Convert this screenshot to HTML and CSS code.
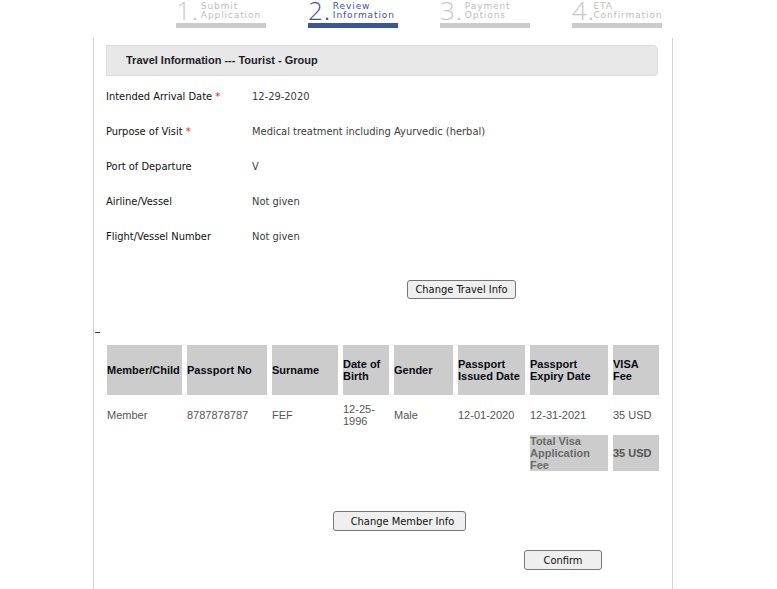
FILE: index.html
```html
<!DOCTYPE html>
<html>
<head>
<meta charset="utf-8">
<title>Review Information</title>
<link rel="stylesheet" href="styles.css">
</head>
<body>
<div class="steps">
  <div class="step">
    <div class="step-top"><span class="num">1</span><span class="dot">.</span><span class="lbl">Submit<br>Application</span></div>
    <div class="bar"></div>
  </div>
  <div class="step active">
    <div class="step-top"><span class="num">2</span><span class="dot">.</span><span class="lbl">Review<br>Information</span></div>
    <div class="bar"></div>
  </div>
  <div class="step">
    <div class="step-top"><span class="num">3</span><span class="dot">.</span><span class="lbl">Payment<br>Options</span></div>
    <div class="bar"></div>
  </div>
  <div class="step">
    <div class="step-top"><span class="num">4</span><span class="dot">.</span><span class="lbl">ETA<br>Confirmation</span></div>
    <div class="bar"></div>
  </div>
</div>

<div class="main">
  <div class="section">
    <div class="panel-head">Travel Information --- Tourist - Group</div>
    <div class="info">
      <div class="row"><div class="lab">Intended Arrival Date <span class="req">*</span></div><div class="val">12-29-2020</div></div>
      <div class="row"><div class="lab">Purpose of Visit <span class="req">*</span></div><div class="val">Medical treatment including Ayurvedic (herbal)</div></div>
      <div class="row"><div class="lab">Port of Departure</div><div class="val">V</div></div>
      <div class="row"><div class="lab">Airline/Vessel</div><div class="val">Not given</div></div>
      <div class="row"><div class="lab">Flight/Vessel Number</div><div class="val">Not given</div></div>
    </div>
    <button class="btn btn-travel">Change Travel Info</button>
  </div>
  <div class="dash"></div>
  <div class="section">
    <table class="members">
      <colgroup>
        <col class="c1"><col class="c2"><col class="c3"><col class="c4"><col class="c5"><col class="c6"><col class="c7"><col class="c8">
      </colgroup>
      <thead>
        <tr>
          <th>Member/Child</th>
          <th>Passport No</th>
          <th>Surname</th>
          <th>Date of Birth</th>
          <th>Gender</th>
          <th>Passport Issued Date</th>
          <th>Passport Expiry Date</th>
          <th>VISA Fee</th>
        </tr>
      </thead>
      <tbody>
        <tr class="data">
          <td>Member</td>
          <td>8787878787</td>
          <td>FEF</td>
          <td>12-25-1996</td>
          <td>Male</td>
          <td>12-01-2020</td>
          <td>12-31-2021</td>
          <td>35 USD</td>
        </tr>
        <tr class="total">
          <td></td><td></td><td></td><td></td><td></td><td></td>
          <td class="tot">Total Visa Application Fee</td>
          <td class="tot">35 USD</td>
        </tr>
      </tbody>
    </table>
    <button class="btn btn-member">Change Member Info</button>
    <button class="btn btn-confirm">Confirm</button>
  </div>
</div>
</body>
</html>
```

FILE: styles.css
```css
html, body {
  margin: 0;
  padding: 0;
  background: #fff;
}
body {
  width: 777px;
  height: 589px;
  overflow: hidden;
  font-family: "DejaVu Sans Condensed", "DejaVu Sans", sans-serif;
  font-size: 11px;
  color: #111;
}

/* steps */
.steps {
  display: flex;
  gap: 42px;
  padding-left: 176px;
  height: 28px;
}
.step {
  width: 90px;
  display: flex;
  flex-direction: column;
  color: #c8c8c8;
}
.step-top {
  height: 23px;
  display: flex;
  align-items: flex-start;
}
.num {
  font-family: "Open Sans", "DejaVu Sans", sans-serif;
  font-weight: 300;
  font-size: 26px;
  line-height: 26px;
  margin-top: -3px;
}
.dot {
  font-family: "DejaVu Sans", sans-serif;
  font-weight: bold;
  font-size: 12px;
  line-height: 12px;
  margin-top: 10px;
  margin-left: 2px;
  width: 8px;
}
.lbl {
  font-family: "DejaVu Sans", sans-serif;
  font-size: 9px;
  line-height: 9px;
  letter-spacing: 0.9px;
  margin-top: 2px;
  color: #bdbdbd;
  white-space: nowrap;
}
.bar {
  height: 5px;
  background: #cccccc;
}
.step.active .num,
.step.active .dot,
.step.active .lbl {
  color: #3a5795;
}
.step.active .bar {
  background: #3a5795;
}

/* main */
.main {
  margin: 10px 0 0 93px;
  padding-top: 7px;
  width: 578px;
  border-left: 1px solid #d4d4d4;
  border-right: 1px solid #d4d4d4;
  height: 560px;
}
.section {
  padding: 0 14px 0 12px;
}
.panel-head {
  height: 29px;
  background: #e8e8e8;
  border: 1px solid #dcdcdc;
  border-radius: 0 5px 4px 0;
  padding-left: 19px;
  font-family: "Liberation Sans", Arial, sans-serif;
  font-weight: bold;
  font-size: 11px;
  line-height: 29px;
  color: #1d1d2a;
}
.info {
  margin-top: 3px;
}
.row {
  display: flex;
  height: 35px;
  align-items: center;
}
.lab {
  width: 146px;
  color: #111;
}
.val {
  color: #3c3c3c;
}
.req {
  color: #e41b1b;
}

.btn {
  display: block;
  height: 19px;
  padding: 0;
  background: #efefef;
  border: 1px solid #767676;
  border-radius: 3px;
  font-family: "DejaVu Sans Condensed", "DejaVu Sans", sans-serif;
  font-size: 11px;
  color: #111;
  box-sizing: border-box;
  text-align: center;
}
.btn-travel {
  margin: 26px 0 0 301px;
  width: 109px;
}
.dash {
  margin: 33px 0 0 1px;
  width: 5px;
  height: 1px;
  background: #2a3a55;
}

/* table */
.members {
  margin: 7px 0 0 -4px;
  border-collapse: separate;
  border-spacing: 5px;
  table-layout: fixed;
  width: 562px;
  font-family: "Liberation Sans", Arial, sans-serif;
  font-size: 11px;
  line-height: 12px;
}
.c1 { width: 75px; }
.c2 { width: 80px; }
.c3 { width: 66px; }
.c4 { width: 46px; }
.c5 { width: 59px; }
.c6 { width: 67px; }
.c7 { width: 78px; }
.c8 { width: 46px; }
.members th {
  background: #cccccc;
  height: 50px;
  padding: 0 1px 0 0;
  text-align: left;
  vertical-align: middle;
  font-weight: bold;
  color: #0a0a14;
  box-sizing: border-box;
}
.members tr.data td {
  height: 30px;
  padding: 3px 1px 3px 0;
  color: #555;
  vertical-align: middle;
  box-sizing: border-box;
}
.members tr.total td {
  height: 36px;
  padding: 0 1px 0 0;
  box-sizing: border-box;
  vertical-align: middle;
}
.members td.tot {
  background: #cccccc;
  font-weight: bold;
  color: #6a6a6a;
}
.members td.tot + td.tot {
  color: #555;
}

.btn-member {
  margin: 35px 0 0 227px;
  width: 133px;
  height: 20px;
  padding: 0 10px 0 16px;
}
.btn-confirm {
  margin: 19px 0 0 418px;
  width: 78px;
  height: 20px;
}
```
